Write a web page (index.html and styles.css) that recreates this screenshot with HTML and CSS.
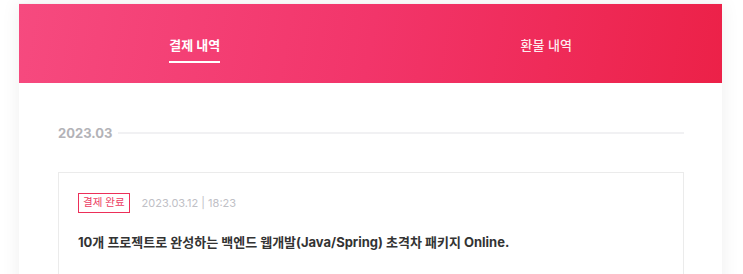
FILE: index.html
```html
<!DOCTYPE html>
<html lang="ko">
<head>
<meta charset="UTF-8">
<meta name="viewport" content="width=device-width, initial-scale=1.0">
<title>결제 내역</title>
<link rel="stylesheet" href="styles.css">
</head>
<body>
<div class="panel">
  <div class="tabs">
    <div class="tab active"><span>결제 내역</span></div>
    <div class="tab"><span>환불 내역</span></div>
  </div>
  <div class="content">
    <div class="month">
      <h2>2023.03</h2>
      <div class="rule"></div>
    </div>
    <div class="order">
      <div class="order-meta">
        <span class="badge">결제 완료</span>
        <span class="date">2023.03.12 | 18:23</span>
      </div>
      <p class="order-title">10개 프로젝트로 완성하는 백엔드 웹개발(Java/Spring) 초격차 패키지 Online.</p>
    </div>
  </div>
</div>
</body>
</html>
```

FILE: styles.css
```css
body {
  margin: 0;
  padding: 3px 21px 0 19px;
  background-color: #fff;
  font-family: Inter, "Noto Sans CJK KR", sans-serif;
  overflow: hidden;
}

.panel {
  background-color: #fff;
  box-shadow: 0 0 18px rgba(0, 0, 0, 0.07);
  border-top: 1px solid #f3f3f3;
  min-height: 400px;
}

.tabs {
  display: flex;
  height: 79px;
  background: linear-gradient(100deg, #f64a7f 0%, #f2356a 50%, #ec2148 100%);
}

.tab {
  flex: 1;
  display: flex;
  justify-content: center;
  align-items: center;
  color: rgba(255, 255, 255, 0.92);
  font-size: 13px;
  font-weight: 500;
}

.tab span {
  padding: 6px 0 7px;
  border-bottom: 2px solid transparent;
  margin-top: 5px;
}

.tab.active {
  color: #fff;
  font-weight: 700;
}

.tab.active span {
  border-bottom-color: #fff;
}

.content {
  padding: 40px 38px 0 39px;
}

.month {
  display: flex;
  align-items: center;
  gap: 6px;
  height: 20px;
}

.month h2 {
  margin: 0;
  font-size: 13px;
  font-weight: 700;
  color: #b3b3b8;
}

.rule {
  flex: 1;
  height: 2px;
  background-color: #f1f1f3;
}

.order {
  margin-top: 29px;
  border: 1px solid #ebebeb;
  padding: 20px 19px 40px;
}

.order-meta {
  display: flex;
  align-items: center;
  gap: 12px;
}

.badge {
  border: 1px solid #ec2f59;
  color: #ec3b62;
  font-size: 10.5px;
  padding: 2px 4px;
  line-height: 14px;
}

.date {
  color: #c0c0c6;
  font-size: 11px;
}

.order-title {
  margin: 19px 0 0;
  font-size: 13px;
  font-weight: 700;
  color: #333;
}
```
